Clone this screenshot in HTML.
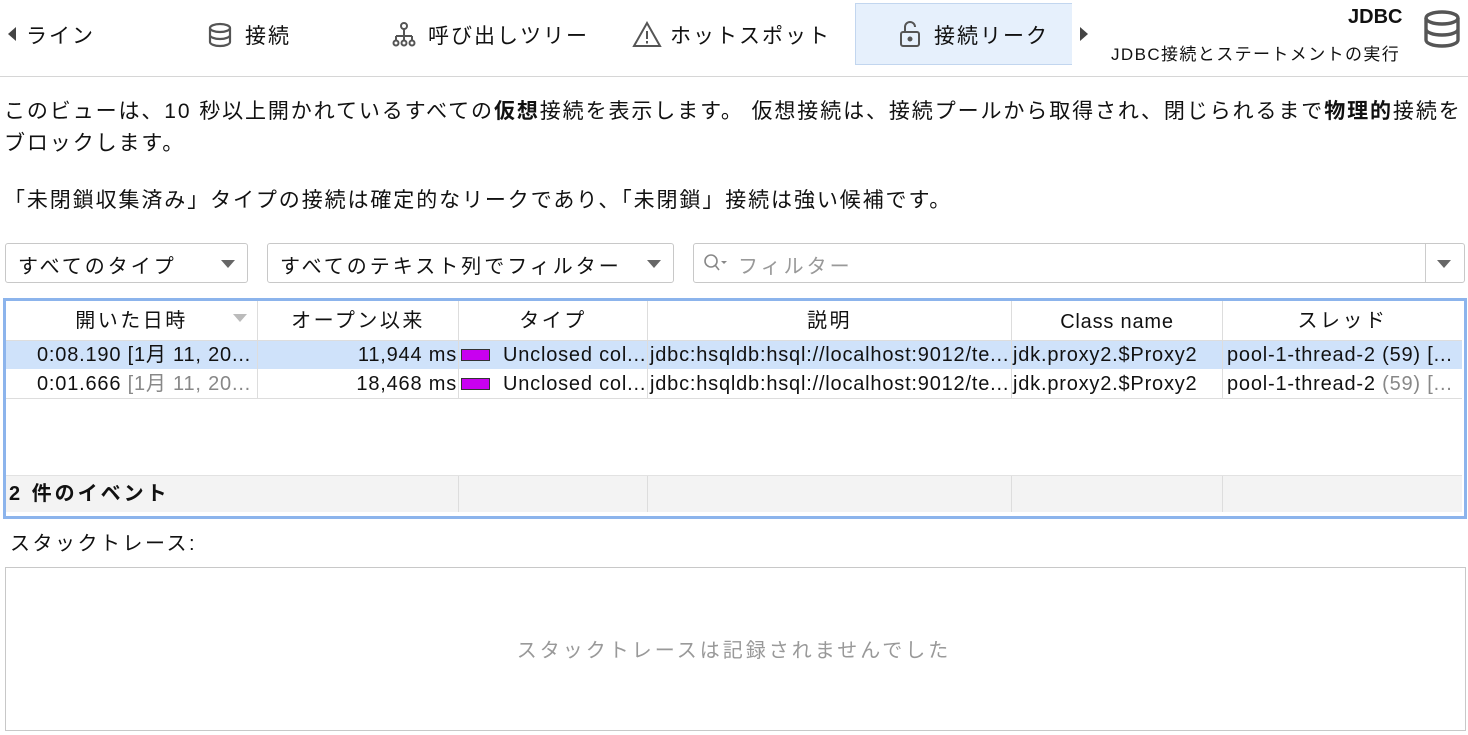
<!DOCTYPE html><html><head><meta charset="utf-8"><style>
*{box-sizing:border-box;margin:0;padding:0}
body{width:1468px;height:735px;background:#fff;font-family:"Liberation Sans","Noto Sans CJK JP",sans-serif;color:#111;position:relative;overflow:hidden}
.a{position:absolute;white-space:nowrap}
.tab{font-size:21px;top:20px;letter-spacing:2px}
.p{font-size:21px;left:4px;letter-spacing:1.9px}
.combo{position:absolute;top:243px;height:40px;border:1px solid #c8c8c8;border-radius:3px;font-size:20px;padding:6px 12px;letter-spacing:3px}
.tri{position:absolute;width:0;height:0;border-left:7px solid transparent;border-right:7px solid transparent;border-top:8px solid #666}
.cell{position:absolute;font-size:20px;line-height:24px;height:24px;white-space:nowrap;overflow:hidden;padding:0 3px;letter-spacing:0.8px}
.h{letter-spacing:2.5px}
.vl{position:absolute;width:1px;background:#ddd}
</style></head><body>
<div class="a" style="left:8px;top:27px;width:0;height:0;border-top:7px solid transparent;border-bottom:7px solid transparent;border-right:8px solid #444"></div>
<div class="a tab" style="left:26px">ライン</div>
<svg class="a" style="left:207px;top:22px" width="26" height="26" viewBox="0 0 26 26" fill="none" stroke="#555" stroke-width="2.2"><ellipse cx="13" cy="6" rx="10" ry="4"/><path d="M3 6v14c0 2.2 4.5 4 10 4s10-1.8 10-4V6M3 13c0 2.2 4.5 4 10 4s10-1.8 10-4"/></svg>
<div class="a tab" style="left:245px">接続</div>
<svg class="a" style="left:391px;top:22px" width="26" height="26" viewBox="0 0 26 26" fill="none" stroke="#555" stroke-width="2"><circle cx="13" cy="4" r="3"/><path d="M13 7v7M5 14h16M5 14v4M13 14v4M21 14v4"/><circle cx="5" cy="21" r="2.5"/><circle cx="13" cy="21" r="2.5"/><circle cx="21" cy="21" r="2.5"/></svg>
<div class="a tab" style="left:428px">呼び出しツリー</div>
<svg class="a" style="left:632px;top:21px" width="30" height="27" viewBox="0 0 30 27" fill="none" stroke="#555" stroke-width="2"><path d="M15 2L28 25H2Z"/><path d="M15 10v8M15 20v2.5"/></svg>
<div class="a tab" style="left:670px">ホットスポット</div>
<div class="a" style="left:855px;top:3px;width:217px;height:62px;background:#e6f0fc;border:1px solid #c2d6ef;border-right:none"></div>
<svg class="a" style="left:898px;top:20px" width="24" height="28" viewBox="0 0 24 28" fill="none" stroke="#555" stroke-width="2"><rect x="3" y="12" width="18" height="14" rx="2"/><path d="M7 12V7a5 5 0 0 1 10 0"/><circle cx="12" cy="19" r="1.5" fill="#555"/></svg>
<div class="a tab" style="left:934px">接続リーク</div>
<div class="a" style="left:1080px;top:27px;width:0;height:0;border-top:7px solid transparent;border-bottom:7px solid transparent;border-left:8px solid #444"></div>
<div class="a" style="left:1348px;top:6px;font-size:20px;font-weight:bold">JDBC</div>
<div class="a" style="left:1111px;top:40px;font-size:17px;letter-spacing:1.4px">JDBC接続とステートメントの実行</div>
<svg class="a" style="left:1422px;top:10px" width="40" height="38" viewBox="0 0 40 38" fill="none" stroke="#555" stroke-width="3.4"><ellipse cx="20" cy="8" rx="16" ry="6"/><path d="M4 8v22c0 3.3 7 6 16 6s16-2.7 16-6V8M4 19c0 3.3 7 6 16 6s16-2.7 16-6"/></svg>
<div class="a" style="left:0;top:76px;width:1468px;height:1px;background:#d6d6d6"></div>
<div class="a p" style="top:95px">このビューは、10 秒以上開かれているすべての<b>仮想</b>接続を表示します。 仮想接続は、接続プールから取得され、閉じられるまで<b>物理的</b>接続を</div>
<div class="a p" style="top:127px">ブロックします。</div>
<div class="a p" style="top:184px">「未閉鎖収集済み」タイプの接続は確定的なリークであり、「未閉鎖」接続は強い候補です。</div>
<div class="combo" style="left:5px;width:243px">すべてのタイプ<div class="tri" style="left:215px;top:16px"></div></div>
<div class="combo" style="left:267px;width:407px">すべてのテキスト列でフィルター<div class="tri" style="left:379px;top:16px"></div></div>
<div class="combo" style="left:693px;width:772px;color:#999;padding-left:44px">フィルター
<svg style="position:absolute;left:9px;top:9px" width="26" height="20" viewBox="0 0 26 20" fill="none" stroke="#888" stroke-width="1.6"><circle cx="8" cy="8" r="6"/><path d="M12 12l4 5"/><path d="M18 8h6l-3 3z" fill="#888" stroke="none"/></svg>
<div style="position:absolute;left:731px;top:0;width:1px;height:38px;background:#ccc"></div><div class="tri" style="left:743px;top:16px"></div></div>
<div class="a" style="left:3px;top:298px;width:1464px;height:221px;border:3px solid #8cb4ec"></div>
<div class="a" style="left:6px;top:341px;width:1456px;height:28px;background:#cfe2fa"></div>
<div class="a" style="left:6px;top:398px;width:1456px;height:1px;background:#ddd"></div>
<div class="a" style="left:6px;top:340px;width:1456px;height:1px;background:#ddd"></div>
<div class="a" style="left:6px;top:475px;width:1456px;height:37px;background:#f3f3f3;border-top:1px solid #e2e2e2"></div>
<div class="vl" style="left:257px;top:301px;height:98px"></div><div class="vl" style="left:458px;top:301px;height:98px"></div><div class="vl" style="left:647px;top:301px;height:98px"></div><div class="vl" style="left:1011px;top:301px;height:98px"></div><div class="vl" style="left:1222px;top:301px;height:98px"></div>
<div class="vl" style="left:458px;top:476px;height:36px"></div><div class="vl" style="left:647px;top:476px;height:36px"></div><div class="vl" style="left:1011px;top:476px;height:36px"></div><div class="vl" style="left:1222px;top:476px;height:36px"></div>
<div class="cell h" style="left:6px;width:251px;top:309px;text-align:center">開いた日時</div>
<div class="tri" style="left:233px;top:314px;border-top-color:#bbb"></div>
<div class="cell h" style="left:258px;width:200px;top:309px;text-align:center">オープン以来</div>
<div class="cell h" style="left:459px;width:188px;top:309px;text-align:center">タイプ</div>
<div class="cell h" style="left:648px;width:363px;top:309px;text-align:center">説明</div>
<div class="cell" style="left:1012px;width:210px;top:310px;text-align:center">Class name</div>
<div class="cell h" style="left:1223px;width:239px;top:309px;text-align:center">スレッド</div>
<div class="cell" style="left:34px;top:343px">0:08.190 [1月 11, 20...</div>
<div class="cell" style="left:258px;width:200px;top:343px;text-align:right;padding-right:1px">11,944 ms</div>
<div class="a" style="left:461px;top:349px;width:29px;height:12px;background:#c800f0;border:1px solid #333"></div>
<div class="cell" style="left:500px;top:343px">Unclosed col...</div>
<div class="cell" style="left:647px;top:343px;width:364px">jdbc:hsqldb:hsql://localhost:9012/te...</div>
<div class="cell" style="left:1010px;top:343px">jdk.proxy2.$Proxy2</div>
<div class="cell" style="left:1224px;top:343px;width:238px">pool-1-thread-2 (59) [...</div>
<div class="cell" style="left:34px;top:372px">0:01.666 <span style="color:#888">[1月 11, 20...</span></div>
<div class="cell" style="left:258px;width:200px;top:372px;text-align:right;padding-right:1px">18,468 ms</div>
<div class="a" style="left:461px;top:378px;width:29px;height:12px;background:#c800f0;border:1px solid #333"></div>
<div class="cell" style="left:500px;top:372px">Unclosed col...</div>
<div class="cell" style="left:647px;top:372px;width:364px">jdbc:hsqldb:hsql://localhost:9012/te...</div>
<div class="cell" style="left:1010px;top:372px">jdk.proxy2.$Proxy2</div>
<div class="cell" style="left:1224px;top:372px;width:238px">pool-1-thread-2 <span style="color:#888">(59) [...</span></div>
<div class="cell" style="left:6px;top:482px;font-weight:bold;letter-spacing:3px">2 件のイベント</div>
<div class="a" style="left:10px;top:527px;font-size:20px;letter-spacing:2.5px">スタックトレース:</div>
<div class="a" style="left:5px;top:567px;width:1461px;height:164px;border:1px solid #c8c8c8"></div>
<div class="a" style="left:0;width:1468px;top:634px;text-align:center;font-size:20px;color:#999;letter-spacing:3px">スタックトレースは記録されませんでした</div>
</body></html>
